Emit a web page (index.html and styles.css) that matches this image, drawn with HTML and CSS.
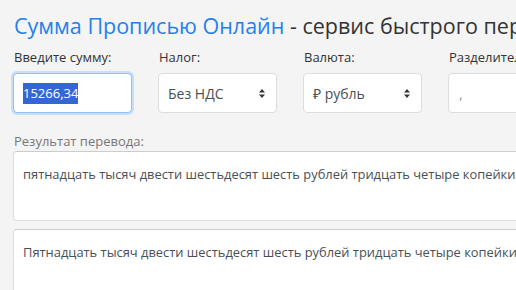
FILE: index.html
```html
<!DOCTYPE html>
<html lang="ru">
<head>
    <meta charset="UTF-8">
    <meta name="viewport" content="width=device-width, initial-scale=1.0">
    <title>Сумма Прописью Онлайн</title>
    <link rel="stylesheet" href="styles.css">
</head>
<body>
    <div class="container">
        <h1><span class="brand">Сумма Прописью Онлайн</span> - сервис быстрого перевода суммы в текст</h1>

        <div class="form-row">
            <div class="form-group">
                <label>Введите сумму:</label>
                <div class="field focused"><span class="selected">15266,34</span></div>
            </div>
            <div class="form-group">
                <label>Налог:</label>
                <div class="field select">
                    <span>Без НДС</span>
                    <svg class="arrows" width="6" height="9" viewBox="0 0 6 9"><path d="M3 0L6 3.5H0z M3 9L0 5.5H6z" fill="#333"/></svg>
                </div>
            </div>
            <div class="form-group">
                <label>Валюта:</label>
                <div class="field select">
                    <span>₽ рубль</span>
                    <svg class="arrows" width="6" height="9" viewBox="0 0 6 9"><path d="M3 0L6 3.5H0z M3 9L0 5.5H6z" fill="#333"/></svg>
                </div>
            </div>
            <div class="form-group">
                <label>Разделитель:</label>
                <div class="field"><span class="muted">,</span></div>
            </div>
        </div>

        <p class="result-label">Результат перевода:</p>
        <div class="result">пятнадцать тысяч двести шестьдесят шесть рублей тридцать четыре копейки</div>
        <div class="result">Пятнадцать тысяч двести шестьдесят шесть рублей тридцать четыре копейки</div>
    </div>
</body>
</html>
```

FILE: styles.css
```css
html, body {
    overflow: hidden;
}
body {
    margin: 0;
    background: #f4f4f4;
    font-family: "Open Sans", Arial, sans-serif;
    color: #333;
}
.container {
    width: 600px;
    padding: 0 13px;
}
h1 {
    margin: 12px 0 0 1px;
    font-size: 21.5px;
    font-weight: normal;
    line-height: 28px;
    white-space: nowrap;
}
.brand {
    color: #2680eb;
}
.form-row {
    display: flex;
    gap: 26px;
    margin-top: 7px;
}
.form-group {
    width: 119px;
    flex: none;
}
.form-group label {
    display: block;
    font-size: 13px;
    line-height: 21px;
    margin: 0 0 5px 1px;
    white-space: nowrap;
}
.field {
    height: 40px;
    box-sizing: border-box;
    background: #fff;
    border: 1px solid #ddd;
    border-radius: 4px;
    padding: 0 11px 0 9px;
    display: flex;
    align-items: center;
    font-size: 14px;
    color: #495057;
}
.field.focused {
    border-color: #8ec0f5;
    box-shadow: 0 0 0 2px #c6dffa;
}
.selected {
    background: #3367d6;
    color: #fff;
    font-size: 13px;
    line-height: 21px;
}
.select {
    justify-content: space-between;
}
.muted {
    color: #999;
    margin: 1px 0 0 1px;
}
.result-label {
    margin: 19px 0 1px 1px;
    font-size: 13px;
    line-height: 18px;
    color: #777;
}
.result {
    height: 70px;
    box-sizing: border-box;
    background: #fff;
    border: 1px solid #ddd;
    border-top-color: #ccc;
    border-radius: 4px;
    padding: 12px 9px;
    margin-bottom: 8px;
    font-size: 12.9px;
    line-height: 20px;
    color: #4a4f56;
    white-space: nowrap;
}
```
